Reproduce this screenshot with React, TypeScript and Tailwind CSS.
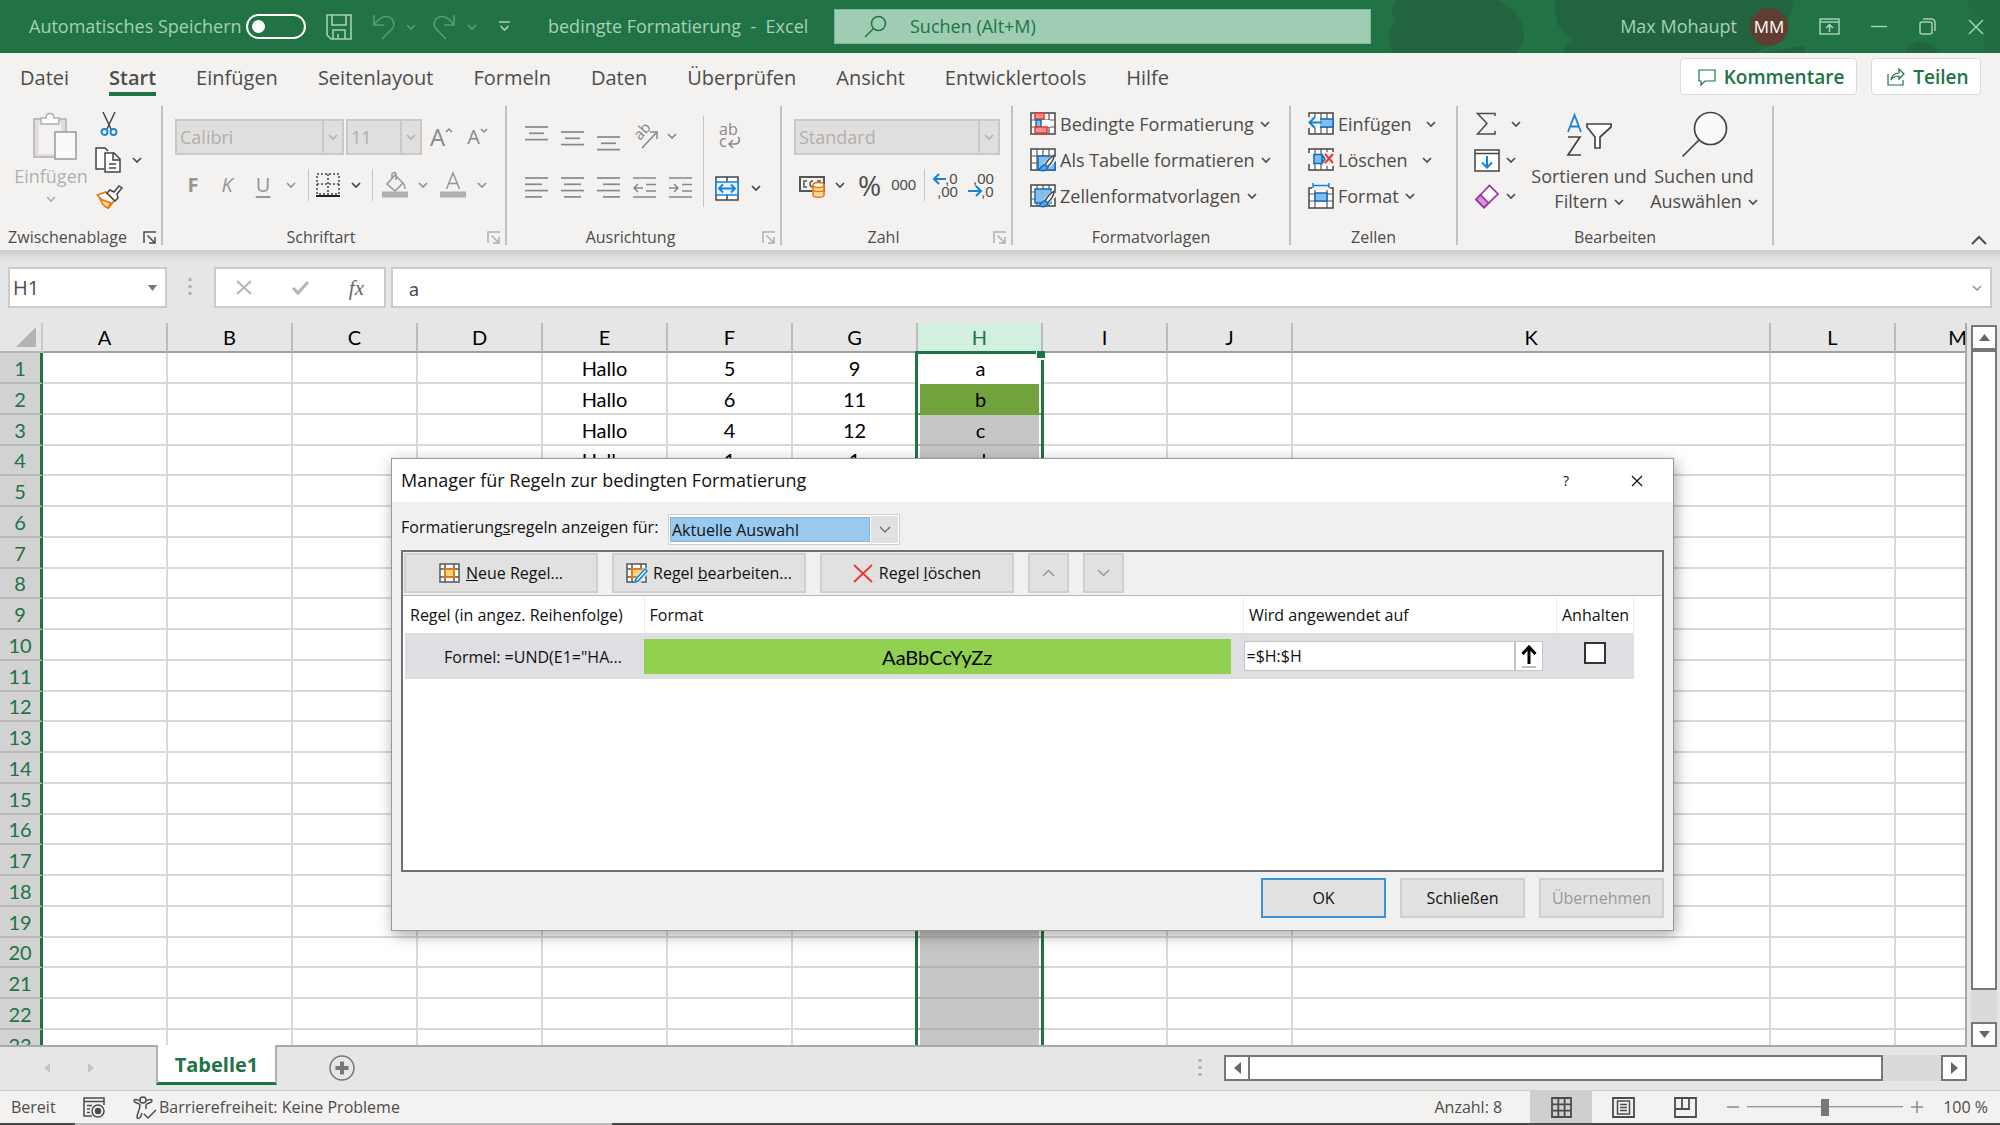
import type { ReactNode } from "react";

const columns = [
  { name: "A", width: 125 },
  { name: "B", width: 125 },
  { name: "C", width: 125 },
  { name: "D", width: 125 },
  { name: "E", width: 125 },
  { name: "F", width: 125 },
  { name: "G", width: 125 },
  { name: "H", width: 125 },
  { name: "I", width: 125 },
  { name: "J", width: 125 },
  { name: "K", width: 478 },
  { name: "L", width: 125 },
  { name: "M", width: 125 },
];

const cells: Record<string, string> = {
  E1: "Hallo", F1: "5", G1: "9", H1: "a",
  E2: "Hallo", F2: "6", G2: "11", H2: "b",
  E3: "Hallo", F3: "4", G3: "12", H3: "c",
  E4: "Hallo", F4: "1", G4: "1", H4: "d",
};

const tabs = [
  "Datei",
  "Start",
  "Einfügen",
  "Seitenlayout",
  "Formeln",
  "Daten",
  "Überprüfen",
  "Ansicht",
  "Entwicklertools",
  "Hilfe",
];

type IconProps = {
  w: number;
  h: number;
  children: ReactNode;
  className?: string;
};

function Icon({ w, h, children, className = "" }: IconProps) {
  return (
    <svg
      width={w}
      height={h}
      viewBox={`0 0 ${w} ${h}`}
      fill="none"
      stroke="currentColor"
      strokeWidth="1.5"
      aria-hidden="true"
      className={`shrink-0 overflow-visible ${className}`}
    >
      {children}
    </svg>
  );
}

function Chevron({ className = "" }: { className?: string }) {
  return (
    <Icon w={10} h={6} className={className}>
      <path d="M1 1l4 4 4-4" strokeWidth="1.7" />
    </Icon>
  );
}

function IconButton({ label, children, className = "" }: { label: string; children: ReactNode; className?: string }) {
  return (
    <button type="button" aria-label={label} className={`flex shrink-0 items-center justify-center ${className}`}>
      {children}
    </button>
  );
}

function Group({ title, launcher, width, children }: { title: string; launcher?: string; width: string; children: ReactNode }) {
  return (
    <section className={`flex shrink-0 flex-col border-r-2 border-[#c3c2c1] ${width}`}>
      <div className="flex-1">{children}</div>
      <div className="flex h-4 items-center">
        <h2 className={`flex-1 text-center text-[16px] leading-4 whitespace-nowrap text-[#4d4c4b] ${launcher ? "pr-2" : ""}`}>
          {title}
        </h2>
        {launcher && (
          <IconButton label={`${title} Optionen`} className={`mr-1 ${launcher}`}>
            <Icon w={14} h={13}>
              <path d="M1 12V1h12M4.500 4.500l7 7M12 6v6H6" />
            </Icon>
          </IconButton>
        )}
      </div>
    </section>
  );
}

function GridIcon({ children }: { children?: ReactNode }) {
  return (
    <Icon w={26} h={24}>
      <rect x="1" y="1" width="24" height="21" fill="#fff" stroke="#444" />
      <path d="M1 8h24M1 15h24M7 1v21M13 1v21M19 1v21" stroke="#555" strokeWidth="1.2" />
      {children}
    </Icon>
  );
}

function BrushMark() {
  return (
    <g>
      <path d="M25 8.500L14 20" stroke="#f3f2f1" strokeWidth="7" />
      <path d="M24 7.500c-3 1-7 6-9 9l2.500 2.500c3-3 6.500-8 6.500-11.500z" fill="#fff" stroke="#444" />
      <path d="M15 16.500c-3 0-3.500 3-6 5 3 2 8 1.500 9-2z" fill="#5ea3dc" stroke="#0f6cbd" />
    </g>
  );
}

const condIcon = (
  <GridIcon>
    <rect x="5" y="1" width="9" height="6" fill="#ff8f8f" stroke="#e8362d" />
    <rect x="6" y="8" width="5" height="7" fill="#83beec" stroke="#0f6cbd" />
    <path d="M12 8h8v7h-8z" fill="#fff" stroke="none" />
    <rect x="5" y="15" width="12" height="6" fill="#ff8f8f" stroke="#e8362d" />
  </GridIcon>
);

const tableIcon = (
  <GridIcon>
    <path d="M8 8h17v14H8z" fill="#83beec" stroke="#0f6cbd" />
    <BrushMark />
  </GridIcon>
);

const styleIcon = (
  <GridIcon>
    <path d="M5 5h16v14H5z" fill="#83beec" stroke="#0f6cbd" />
    <BrushMark />
  </GridIcon>
);

const insertIcon = (
  <GridIcon>
    <rect x="9" y="7" width="16" height="8" fill="#83beec" stroke="#0f6cbd" />
    <path d="M0 5h12v11H0z" fill="#f3f2f1" stroke="none" />
    <path d="M14 10.500H2M7 5l-5.500 5.500L7 16" stroke="#1683d8" strokeWidth="2" />
  </GridIcon>
);

const deleteIcon = (
  <GridIcon>
    <path d="M0 5h5v11H0zM14 4h12v14H14z" fill="#f3f2f1" stroke="none" />
    <path d="M6 6.500h8v9H6zM14 6.500l3 4.500-3 4.500" fill="#83beec" stroke="#0f6cbd" />
    <path d="M17 6l8 9M25 6l-8 9" stroke="#e8362d" strokeWidth="2" />
  </GridIcon>
);

const formatIcon = (
  <Icon w={26} h={26}>
    <rect x="1" y="5" width="24" height="20" fill="#fff" stroke="#444" />
    <path d="M1 11h24M1 18h24M7 5v20M19 5v20" stroke="#555" strokeWidth="1.200" />
    <path d="M4 0h18v7H4z" fill="#f3f2f1" stroke="none" />
    <rect x="7" y="10" width="12" height="8" fill="#83beec" stroke="#0f6cbd" />
    <path d="M5 2.500h16M5 0v5M21 0v5" stroke="#1683d8" />
  </Icon>
);

function LabelButton({ icon, label, gap = "gap-1.5" }: { icon: ReactNode; label: string; gap?: string }) {
  return (
    <button type="button" className="flex h-9 items-center text-[#4d4c4b]">
      {icon}
      <span className={`ml-1 flex items-center text-[18px] leading-6 ${gap}`}>
        {label}
        <Chevron />
      </span>
    </button>
  );
}

function Lines({ rows, top = 1 }: { rows: [number, number][]; top?: number }) {
  return (
    <Icon w={23} h={26}>
      {rows.map(([x, w], i) => (
        <path key={i} d={`M${x} ${top + i * 6.300}h${w}`} strokeWidth="1.700" />
      ))}
    </Icon>
  );
}

function TitleBar() {
  return (
    <header className="relative h-[53px] overflow-hidden bg-[#217346] text-[#a5d0b6]">
      <svg className="absolute top-0 right-0" width="620" height="53" viewBox="0 0 620 53" aria-hidden="true">
        <path d="M14 53c-8-12-6-24 2-31-6-8-4-16 0-22h102c28 14 32 38 18 53z" fill="#21643f" />
        <path d="M176 0c-4 22 6 34 17 39-6 6-9 10-11 14h199l44-8v8h-50c16-6 22-12 30-25 4-12 8-18 8-28z" fill="#21643f" />
        <path d="M526 53c4-15 26-15 32 0z" fill="#21643f" />
        <path d="M586 0h34v53h-16c4-22-6-38-18-53z" fill="#216c43" />
      </svg>
      <div className="relative flex h-full items-center">
        <div className="flex w-[834px] shrink-0 items-center">
          <span className="ml-[29px] w-[217px] text-[18px] whitespace-nowrap">Automatisches Speichern</span>
          <button
            type="button"
            role="switch"
            aria-checked="false"
            aria-label="Automatisches Speichern"
            className="flex h-[25px] w-[60px] shrink-0 items-center rounded-full border-2 border-white pl-1"
          >
            <span className="size-[13px] rounded-full bg-white" />
          </button>
          <IconButton label="Speichern" className="ml-5">
            <Icon w={26} h={26}>
              <path d="M1 1h24v24H5l-4-4zM6 1v10h14V1M7 25v-9h12v9M12 25v-5" strokeWidth="1.600" />
            </Icon>
          </IconButton>
          <IconButton label="Rückgängig" className="ml-5 gap-[11px] text-[#5c9a77]">
            <Icon w={23} h={26}>
              <path d="M2 1v10h10M2 11C9 1 16 1 20 5c3 4 2 8-1 11l-9 9" />
            </Icon>
            <Chevron />
          </IconButton>
          <IconButton label="Wiederholen" className="ml-[17px] gap-[11px] text-[#5c9a77]">
            <Icon w={23} h={26}>
              <path d="M21 1v10H11M21 11C14 1 7 1 3 5c-3 4-2 8 1 11l9 9" />
            </Icon>
            <Chevron />
          </IconButton>
          <IconButton label="Symbolleiste anpassen" className="ml-[22px]">
            <Icon w={11} h={11}>
              <path d="M0 1h11M1.500 5l4 4 4-4" strokeWidth="1.700" />
            </Icon>
          </IconButton>
          <h1 className="ml-[38px] text-[18px] whitespace-pre">bedingte Formatierung  -  Excel</h1>
        </div>
        <label className="flex h-[35px] w-[537px] shrink items-center border border-[#7db898] bg-[#9fcdb3] pl-[29px] text-[#217346]">
          <Icon w={23} h={23}>
            <circle cx="14.500" cy="8.500" r="7" />
            <path d="M9.500 13.500L1 22" />
          </Icon>
          <input
            aria-label="Suchen"
            placeholder="Suchen (Alt+M)"
            className="ml-[23px] min-w-0 flex-1 bg-transparent text-[18px] outline-none placeholder:text-[#217346]"
          />
        </label>
        <div className="ml-auto flex items-center pr-4">
          <span className="text-[18px]">Max Mohaupt</span>
          <span className="ml-[13px] flex size-[38px] items-center justify-center rounded-full bg-[#5f3d30] text-[17px] text-white">
            MM
          </span>
          <IconButton label="Menüband anzeigen" className="ml-[31px]">
            <Icon w={21} h={17}>
              <path d="M1 1h19v15H1zM1 4h19M10.500 14V7M7 10l3.500-3.500L14 10" />
            </Icon>
          </IconButton>
          <IconButton label="Minimieren" className="ml-[31px]">
            <Icon w={16} h={16}><path d="M0 7.500h16" /></Icon>
          </IconButton>
          <IconButton label="Wiederherstellen" className="ml-8">
            <Icon w={17} h={17}>
              <rect x="1" y="4" width="12" height="12" rx="2" />
              <path d="M4 1h8q4 0 4 4v8" />
            </Icon>
          </IconButton>
          <IconButton label="Schließen" className="ml-8">
            <Icon w={16} h={16}><path d="M1 1l14 14M15 1L1 15" /></Icon>
          </IconButton>
        </div>
      </div>
    </header>
  );
}

function TabRow() {
  return (
    <div className="flex h-[53px] items-start">
      <nav className="flex gap-10 pt-[11px] pl-5 text-[20px] leading-7 text-[#4d4c4b]">
        {tabs.map((tab) => (
          <a
            key={tab}
            href="#"
            className={tab === "Start" ? "border-b-4 border-[#217346] font-semibold" : "border-b-4 border-transparent"}
          >
            {tab}
          </a>
        ))}
      </nav>
      <div className="ml-auto flex gap-[14px] pt-[5px] pr-[19px] text-[19px] leading-6 font-semibold text-[#217346]">
        <button type="button" className="flex h-[37px] w-[177px] items-center justify-center gap-2 rounded border border-[#dcdbda] bg-white pl-[5px] pt-px">
          <Icon w={18} h={17}>
            <path d="M1 1h16v11H7l-4 4v-4H1z" strokeWidth="1.200" />
          </Icon>
          Kommentare
        </button>
        <button type="button" className="flex h-[37px] w-[110px] items-center justify-center gap-2 rounded border border-[#dcdbda] bg-white pl-1 pt-px">
          <Icon w={18} h={18}>
            <path d="M1 6v11h15v-5M4 12c1-5 4-7 8-7V1l5 5-5 5V8c-4 0-6 1-8 4z" strokeWidth="1.200" />
          </Icon>
          Teilen
        </button>
      </div>
    </div>
  );
}

function RibbonSelect({ label, value, width }: { label: string; value: string; width: string }) {
  return (
    <div className={`flex h-9 items-center border-2 border-[#cbc9c8] bg-[#e1dfdd] text-[#b1afad] ${width}`}>
      <select aria-label={label} disabled className="h-full min-w-0 flex-1 appearance-none pl-[3px] text-[18px] opacity-100">
        <option>{value}</option>
      </select>
      <span className="flex h-full w-5 shrink-0 items-center justify-center border-l-2 border-[#cbc9c8]">
        <Chevron />
      </span>
    </div>
  );
}

const divider = "h-8 w-px shrink-0 bg-[#c8c6c4]";
const iconText = "font-['Liberation_Sans',sans-serif] text-[15px]";

function Ribbon() {
  return (
    <div className="flex h-[144px] pb-[5px] text-[#4d4c4b]">
      <Group title="Zwischenablage" launcher="text-[#4d4c4b]" width="w-[163px]">
        <div className="flex">
          <button type="button" className="flex w-[90px] flex-col items-center pt-[6px] pl-3 text-[18px] leading-6 text-[#b1afad]">
            <Icon w={44} h={48} className="ml-2">
              <path d="M1 7h32v38H1z" fill="#e1dfdd" />
              <path d="M6 10h22v32H6z" fill="#f3f2f1" stroke="none" />
              <path d="M8 12V6h5c0-6 8-6 8 0h5v6z" fill="#fff" />
              <path d="M22 20h21v27H22z" fill="#fafafa" stroke="#999" />
            </Icon>
            <span className="mt-1">Einfügen</span>
            <Chevron className="mt-2" />
          </button>
          <div className="flex flex-col pl-[5px]">
            <IconButton label="Ausschneiden" className="h-9 w-7">
              <Icon w={18} h={26}>
                <path d="M3 1l8 17M15 1L7 18" stroke="#444" />
                <circle cx="4.500" cy="21" r="3" stroke="#1683d8" strokeWidth="1.800" />
                <circle cx="13.500" cy="21" r="3" stroke="#1683d8" strokeWidth="1.800" />
              </Icon>
            </IconButton>
            <IconButton label="Kopieren" className="h-9 gap-[10px]">
              <Icon w={27} h={26}>
                <path d="M9 22H1V1h9l3 3" fill="#fff" stroke="#444" />
                <path d="M10 6h9l6 6v13H10zM18 6v7h7M14 17h7M14 21h7" fill="#fff" stroke="#444" />
              </Icon>
              <Chevron />
            </IconButton>
            <IconButton label="Format übertragen" className="h-9 w-7">
              <Icon w={27} h={25}>
                <path d="M1.500 11l8-3 9 8-6 8z" fill="#fff" stroke="#e8780c" strokeWidth="1.800" />
                <path d="M4 15l11 4-3 5c-3-1-6-4-8-9z" fill="#fcd385" stroke="#e8780c" />
                <path d="M11 9l3-3 4 2 5-6 3 2-5 6 1 4-3 3z" fill="#fff" stroke="#444" />
              </Icon>
            </IconButton>
          </div>
        </div>
      </Group>

      <Group title="Schriftart" launcher="text-[#b1afad]" width="w-[344px]">
        <div className="flex items-center gap-[2px] pt-[13px] pl-3 text-[#8a8886]">
          <RibbonSelect label="Schriftart" value="Calibri" width="w-[169px]" />
          <RibbonSelect label="Schriftgrad" value="11" width="w-[76px]" />
          <button type="button" aria-label="Schrift vergrößern" className="ml-[6px] flex items-start text-[24px] leading-7">
            A<Icon w={8} h={5} className="mt-[5px]"><path d="M1 4l3-3 3 3" /></Icon>
          </button>
          <button type="button" aria-label="Schrift verkleinern" className="ml-3 flex items-start text-[20px] leading-7">
            A<Icon w={8} h={5} className="mt-[5px]"><path d="M1 1l3 3 3-3" /></Icon>
          </button>
        </div>
        <div className="flex items-center pt-[14px] pl-5 text-[20px] leading-8 text-[#979593]">
          <button type="button" className="w-5 font-bold">F</button>
          <button type="button" className="ml-[14px] w-5 italic">K</button>
          <button type="button" className="ml-4 w-5 underline underline-offset-4">U</button>
          <Chevron className="ml-[13px]" />
          <span className={`ml-3 ${divider}`} />
          <IconButton label="Rahmen" className="ml-[7px] gap-[11px] text-[#444]">
            <Icon w={24} h={24}>
              <path d="M1 1h22v20H1zM1 11h22M12 1v20" strokeDasharray="2 2" />
              <path d="M0 23h24" stroke="#222" strokeWidth="2" />
            </Icon>
            <Chevron />
          </IconButton>
          <span className={`ml-[11px] ${divider}`} />
          <IconButton label="Füllfarbe" className="ml-[9px] gap-[10px]">
            <Icon w={26} h={26}>
              <path d="M5 12l8-9 8 8-8 8zM10 6V2c1-2 4-2 4 0v6M21 11c2 2 2 4 2 6" />
              <path d="M0 22.500h26" stroke="#b1afad" strokeWidth="6" />
            </Icon>
            <Chevron />
          </IconButton>
          <IconButton label="Schriftfarbe" className="ml-3 gap-[11px]">
            <Icon w={26} h={26}>
              <path d="M6.500 17L13 1l6.500 16M9 11.500h8" />
              <path d="M0 22.500h26" stroke="#b1afad" strokeWidth="6" />
            </Icon>
            <Chevron />
          </IconButton>
        </div>
      </Group>

      <Group title="Ausrichtung" launcher="text-[#b1afad]" width="w-[275px]">
        <div className="flex pl-[18px] text-[#8a8886]">
          <div className="flex w-[178px] flex-col gap-[14px] pt-[10px]">
            <div className="flex h-10 items-center gap-[13px]">
              <IconButton label="Oben ausrichten"><Lines rows={[[0, 23], [4, 15], [0, 23]]} top={4} /></IconButton>
              <IconButton label="Zentriert ausrichten"><Lines rows={[[0, 23], [4, 15], [0, 23]]} top={9} /></IconButton>
              <IconButton label="Unten ausrichten"><Lines rows={[[0, 23], [4, 15], [0, 23]]} top={14} /></IconButton>
              <button type="button" aria-label="Ausrichtung" className="flex items-center gap-2">
                <Icon w={26} h={26}>
                  <text transform="translate(7 18) rotate(-48)" fill="currentColor" stroke="none" className="text-[15px]">ab</text>
                  <path d="M9 25L24 9M17 9h7v7" />
                </Icon>
                <Chevron />
              </button>
            </div>
            <div className="flex h-9 items-center gap-[13px]">
              <IconButton label="Linksbündig"><Lines rows={[[0, 23], [0, 17], [0, 23], [0, 17]]} top={3} /></IconButton>
              <IconButton label="Zentriert"><Lines rows={[[0, 23], [3, 17], [0, 23], [3, 17]]} top={3} /></IconButton>
              <IconButton label="Rechtsbündig"><Lines rows={[[0, 23], [6, 17], [0, 23], [6, 17]]} top={3} /></IconButton>
              <IconButton label="Einzug verkleinern">
                <Icon w={23} h={26}>
                  <path d="M0 3h23M13 9.500h10M13 16h10M0 22h23" strokeWidth="1.700" />
                  <path d="M10 13H1M5 9l-4 4 4 4" />
                </Icon>
              </IconButton>
              <IconButton label="Einzug vergrößern">
                <Icon w={23} h={26}>
                  <path d="M0 3h23M13 9.500h10M13 16h10M0 22h23" strokeWidth="1.700" />
                  <path d="M0 13h9M5 9l4 4-4 4" />
                </Icon>
              </IconButton>
            </div>
          </div>
          <span className="mt-[10px] h-[91px] w-px bg-[#c8c6c4]" />
          <div className="flex flex-col gap-[14px] pt-[10px] pl-[11px]">
            <IconButton label="Textumbruch" className="h-10 w-7">
              <Icon w={24} h={28}>
                <text x="2" y="13" fill="currentColor" stroke="none" className="text-[16px]">ab</text>
                <text x="2" y="25" fill="currentColor" stroke="none" className="text-[16px]">c</text>
                <path d="M21 15c3 3 1 7-3 7h-6M16 18l-4 4 4 4" />
              </Icon>
            </IconButton>
            <IconButton label="Verbinden und zentrieren" className="h-9 gap-3 text-[#444]">
              <Icon w={24} h={25}>
                <path d="M1 1h22v23H1zM12 1v5M12 19v5" fill="#fff" />
                <path d="M1 6h22v13H1z" fill="#e5f1fb" stroke="#1683d8" />
                <path d="M4 12.500h16M8 8.500l-4 4 4 4M16 8.500l4 4-4 4" stroke="#1683d8" strokeWidth="1.800" />
              </Icon>
              <Chevron />
            </IconButton>
          </div>
        </div>
      </Group>

      <Group title="Zahl" launcher="text-[#b1afad]" width="w-[231px]">
        <div className="pt-[13px] pl-3">
          <RibbonSelect label="Zahlenformat" value="Standard" width="w-[206px]" />
        </div>
        <div className="flex items-center pt-[14px] pl-[17px] text-[#4d4c4b]">
          <IconButton label="Buchhaltungszahlenformat" className="gap-[10px]">
            <Icon w={26} h={26}>
              <path d="M1 5h24v14H1z" strokeWidth="2" stroke="#555" />
              <path d="M8 9H5v6h3M14 9c-4-1-4 7 0 6M18 9h3v3" stroke="#555" />
              <path d="M14 13v10c0 3 11 3 11 0V13" fill="#fdd9a0" stroke="#e8780c" />
              <ellipse cx="19.500" cy="13" rx="5.500" ry="2.500" fill="#fff" stroke="#e8780c" />
              <path d="M14 18c0 2 11 2 11 0" stroke="#e8780c" />
            </Icon>
            <Chevron />
          </IconButton>
          <button type="button" className="ml-[13px] text-[28px] leading-8">%</button>
          <button type="button" className={`ml-[10px] ${iconText} leading-8`}>000</button>
          <span className={`ml-2 ${divider}`} />
          <IconButton label="Dezimalstelle hinzufügen" className="ml-2">
            <Icon w={25} h={26}>
              <text x="12" y="12" fill="currentColor" stroke="none" className={iconText}>,0</text>
              <text x="4" y="25" fill="currentColor" stroke="none" className={iconText}>,00</text>
              <path d="M13 7H1M6 2L1 7l5 5" stroke="#1683d8" strokeWidth="2" />
            </Icon>
          </IconButton>
          <IconButton label="Dezimalstelle löschen" className="ml-[10px]">
            <Icon w={26} h={26}>
              <text x="5" y="12" fill="currentColor" stroke="none" className={iconText}>,00</text>
              <text x="13" y="25" fill="currentColor" stroke="none" className={iconText}>,0</text>
              <path d="M0 19h13M8 14l5 5-5 5" stroke="#1683d8" strokeWidth="2" />
            </Icon>
          </IconButton>
        </div>
      </Group>

      <Group title="Formatvorlagen" width="w-[278px]">
        <div className="flex flex-col pl-[17px]">
          <LabelButton icon={condIcon} label="Bedingte Formatierung" />
          <LabelButton icon={tableIcon} label="Als Tabelle formatieren" />
          <LabelButton icon={styleIcon} label="Zellenformatvorlagen" />
        </div>
      </Group>

      <Group title="Zellen" width="w-[167px]">
        <div className="flex flex-col pl-[17px]">
          <LabelButton icon={insertIcon} label="Einfügen" gap="gap-[14px]" />
          <LabelButton icon={deleteIcon} label="Löschen" gap="gap-[14px]" />
          <LabelButton icon={formatIcon} label="Format" />
        </div>
      </Group>

      <Group title="Bearbeiten" width="w-[316px]">
        <div className="flex text-[18px] leading-[25px]">
          <div className="flex w-[71px] flex-col items-start pl-4">
            <IconButton label="Summe" className="h-9 gap-[11px]">
              <Icon w={26} h={24}>
                <path d="M21 4V1.500H3.500L13 11.500 3.500 22H21V19" />
              </Icon>
              <Chevron />
            </IconButton>
            <IconButton label="Ausfüllen" className="h-9 gap-[6px]">
              <Icon w={26} h={23}>
                <path d="M1 1h24v21H1z" fill="#fff" stroke="#444" />
                <path d="M1 4.500h24" stroke="#444" />
                <path d="M13 7v11M8 13.500l5 5 5-5" stroke="#1683d8" strokeWidth="2" />
              </Icon>
              <Chevron />
            </IconButton>
            <IconButton label="Löschen" className="h-9 gap-[6px]">
              <Icon w={26} h={25}>
                <path d="M2 15.500L15.500 1.500l8.500 8.500L10 23.500z" fill="#fff" stroke="#9b2fa5" strokeWidth="1.700" />
                <path d="M2 15.500L6.500 11l8 8-4.500 4.500z" fill="#d195d6" stroke="#9b2fa5" strokeWidth="1.700" />
              </Icon>
              <Chevron />
            </IconButton>
          </div>
          <button type="button" className="flex w-[120px] flex-col items-center pt-2">
            <Icon w={46} h={43}>
              <path d="M2 18L8.500 1 15 18M4 12.500h9" stroke="#1683d8" strokeWidth="1.800" />
              <path d="M2 23h12L2 41h13" stroke="#444" strokeWidth="1.700" />
              <path d="M21 10h24v3L34 23v11h-5V23l-8-10z" fill="#fff" stroke="#444" strokeWidth="1.700" />
            </Icon>
            <span className="mt-[7px]">Sortieren und</span>
            <span className="flex items-center gap-[6px]">Filtern <Chevron /></span>
          </button>
          <button type="button" className="flex w-[110px] flex-col items-center pt-[5px]">
            <Icon w={47} h={46}>
              <circle cx="29.500" cy="17.500" r="16" fill="#fafafa" stroke="#444" strokeWidth="1.700" />
              <path d="M18 29L1.500 45.500" stroke="#444" strokeWidth="1.700" />
            </Icon>
            <span className="mt-[7px]">Suchen und</span>
            <span className="flex items-center gap-[6px]">Auswählen <Chevron /></span>
          </button>
        </div>
      </Group>
      <IconButton label="Menüband reduzieren" className="mr-[13px] ml-auto self-end">
        <Icon w={16} h={9}><path d="M1 8l7-7 7 7" strokeWidth="2" /></Icon>
      </IconButton>
    </div>
  );
}

function FormulaBar() {
  return (
    <div className="flex h-[73px] items-start border-t border-[#cfcfcf] bg-linear-to-b from-[#d0d0d0] to-[#e6e6e6] to-15% px-2 pt-4 text-[#4d4c4b]">
      <div className="flex h-[41px] w-[159px] items-center border-2 border-[#cbcbcb] bg-white pr-2">
        <input aria-label="Namenfeld" defaultValue="H1" className="min-w-0 flex-1 pl-[3px] text-[20px] outline-none" />
        <Icon w={9} h={6}><path d="M0 0h9L4.500 6z" fill="#777" stroke="none" /></Icon>
      </div>
      <Icon w={4} h={18} className="mt-[11px] ml-[21px] text-[#b0b0b0]">
        <path d="M2 0v18" strokeWidth="3" strokeDasharray="3 4" />
      </Icon>
      <div className="ml-[22px] flex h-[41px] w-[172px] items-center justify-between border-2 border-[#cbcbcb] bg-white px-5 text-[#b5b5b5]">
        <IconButton label="Abbrechen">
          <Icon w={16} h={15}><path d="M1 1l14 13M15 1L1 14" strokeWidth="2" /></Icon>
        </IconButton>
        <IconButton label="Eingeben">
          <Icon w={17} h={14}><path d="M1 7l5 5L16 1" strokeWidth="3" /></Icon>
        </IconButton>
        <button type="button" aria-label="Funktion einfügen" className="font-['Liberation_Serif',serif] text-[21px] leading-8 text-[#666] italic">
          fx
        </button>
      </div>
      <div className="ml-[5px] flex h-[41px] flex-1 items-center border-2 border-[#cbcbcb] bg-white pr-2 pl-4">
        <input
          aria-label="Bearbeitungsleiste"
          defaultValue="a"
          className="min-w-0 flex-1 font-[Lato,sans-serif] text-[20px] outline-none"
        />
        <Chevron className="text-[#999]" />
      </div>
    </div>
  );
}

function cellStyle(col: string, row: number) {
  if (col !== "H") return "border-r-2 border-b-2 border-[#d9d9d9]";
  const gap = "shadow-[inset_2px_0_0_#fff,inset_-4px_0_0_#fff]";
  if (row === 1) return `border-b-2 border-white ${gap}`;
  if (row === 2) return `border-b-2 border-[#72a23d] bg-[#72a23d] ${gap}`;
  return `border-b-2 border-[#b2b2b2] bg-[#c6c6c6] ${gap}`;
}

function Sheet() {
  return (
    <div className="flex min-h-0 flex-1">
      <div className="relative min-w-0 flex-1 overflow-hidden border-r-2 border-b-2 border-[#a9a9a9] bg-white">
        <table className="w-[2021px] table-fixed border-separate border-spacing-0 text-center font-[Lato,sans-serif] text-[20px] leading-7 text-black">
          <colgroup>
            <col className="w-[43px]" />
            {columns.map((c) => (
              <col key={c.name} style={{ width: c.width }} />
            ))}
          </colgroup>
          <thead>
            <tr className="h-[30px] bg-[#e6e6e6]">
              <th aria-label="Alles auswählen" className="border-r-2 border-b-2 border-[#b5b5b5] border-r-[#c9c9c9] p-0">
                <Icon w={20} h={20} className="ml-4"><path d="M20 0v20H0z" fill="#b3b3b3" stroke="none" /></Icon>
              </th>
              {columns.map((c) => (
                <th
                  key={c.name}
                  scope="col"
                  className={`border-r-2 border-b-2 border-r-[#bcbcbc] border-b-[#a0a0a0] p-0 font-normal ${
                    c.name === "H" ? "bg-[#d2f0e0] text-[#217346]" : ""
                  }`}
                >
                  {c.name}
                </th>
              ))}
            </tr>
          </thead>
          <tbody>
            {Array.from({ length: 23 }, (_, i) => i + 1).map((row) => (
              <tr key={row} className="h-[31px] nth-[4n]:h-[30px]">
                <th
                  scope="row"
                  className="border-r-[3px] border-b-2 border-r-[#217346] border-b-[#b8b8b8] bg-[#d2d2d2] p-0 font-normal text-[#217346]"
                >
                  {row}
                </th>
                {columns.map((c) => (
                  <td key={c.name} className={`p-0 ${cellStyle(c.name, row)}`}>
                    {cells[`${c.name}${row}`]}
                  </td>
                ))}
              </tr>
            ))}
          </tbody>
        </table>
        <div className="pointer-events-none absolute top-[28px] -bottom-1 left-[915px] w-[129px] border-[3px] border-[#217346]">
          <span className="absolute -top-[3px] -right-[4px] size-[9px] border-b-2 border-l border-white bg-[#217346]" />
        </div>
      </div>
      <div className="flex w-[33px] flex-col bg-[#e6e6e6] pt-[2px] pr-[3px] pl-1">
        <IconButton label="Nach oben" className="h-[25px] border-2 border-[#777] bg-white">
          <Icon w={11} h={7}><path d="M0 7h11L5.500 0z" fill="#666" stroke="none" /></Icon>
        </IconButton>
        <div className="flex flex-1 flex-col bg-[#dadada] pb-8">
          <div className="flex-1 border-2 border-[#777] bg-white" />
        </div>
        <IconButton label="Nach unten" className="h-[25px] border-2 border-[#777] bg-white">
          <Icon w={11} h={7}><path d="M0 0h11L5.500 7z" fill="#666" stroke="none" /></Icon>
        </IconButton>
      </div>
    </div>
  );
}

function SheetTabs() {
  return (
    <div className="flex h-[43px] items-start bg-[#e6e6e6] text-[#c4c4c4]">
      <div className="flex w-[156px] gap-[38px] pt-4 pl-11">
        <IconButton label="Vorheriges Blatt">
          <Icon w={6} h={10}><path d="M6 0v10L0 5z" fill="currentColor" stroke="none" /></Icon>
        </IconButton>
        <IconButton label="Nächstes Blatt">
          <Icon w={6} h={10}><path d="M0 0v10l6-5z" fill="currentColor" stroke="none" /></Icon>
        </IconButton>
      </div>
      <button
        type="button"
        className="z-10 -mt-[2px] h-10 w-[121px] border-x-2 border-b-[3px] border-x-[#b0b0b0] border-b-[#217346] bg-white pt-[2px] text-[20px] leading-9 font-bold text-[#217346]"
      >
        Tabelle1
      </button>
      <IconButton label="Neues Blatt" className="mt-2 ml-[52px] text-[#777]">
        <Icon w={26} h={26}>
          <circle cx="13" cy="13" r="12" />
          <path d="M6.500 13h13M13 6.500v13" strokeWidth="4" />
        </Icon>
      </IconButton>
      <Icon w={4} h={18} className="mt-3 ml-auto text-[#b0b0b0]">
        <path d="M2 0v18" strokeWidth="3" strokeDasharray="3 4" />
      </Icon>
      <div className="mt-2 mr-[33px] ml-[22px] flex h-[26px] w-[38%] max-w-[743px] bg-[#dadada]">
        <IconButton label="Nach links" className="w-[26px] border-2 border-[#777] bg-white">
          <Icon w={7} h={12}><path d="M7 0v12L0 6z" fill="#666" stroke="none" /></Icon>
        </IconButton>
        <div className="flex-1 border-2 border-l-0 border-[#777] bg-white" />
        <IconButton label="Nach rechts" className="ml-[58px] w-[26px] border-2 border-[#777] bg-white">
          <Icon w={7} h={12}><path d="M0 0v12l7-6z" fill="#666" stroke="none" /></Icon>
        </IconButton>
      </div>
    </div>
  );
}

function StatusBar() {
  return (
    <footer className="flex h-[33px] shrink-0 items-center border-t border-[#cfcfcf] bg-[#f3f2f1] text-[16px] text-[#4d4c4b]">
      <span className="ml-[11px] w-[72px]">Bereit</span>
      <IconButton label="Makro aufzeichnen" className="w-[22px]">
        <Icon w={22} h={21}>
          <path d="M9 19H1V1h20v7M1 4.500h20M4 8.500h5M4 12h3M4 15.500h3" />
          <circle cx="15" cy="14" r="6" />
          <circle cx="15" cy="14" r="2.500" fill="currentColor" />
        </Icon>
      </IconButton>
      <button type="button" className="ml-7 flex items-center gap-[2px]">
        <Icon w={24} h={23}>
          <circle cx="10" cy="4" r="3" />
          <path d="M7 5C4 3 1 3 1 5s5 2 6 4c0 5-3 8-3 12 0 2 3 2 4-1l1-3M13 5c3-2 6-2 6 0s-5 2-6 4v4M11 18l4 4 8-8" />
        </Icon>
        Barrierefreiheit: Keine Probleme
      </button>
      <span className="mr-7 ml-auto">Anzahl: 8</span>
      <IconButton label="Normal" className="h-full w-[62px] bg-[#d0cfcd]">
        <Icon w={21} h={21}>
          <path d="M1 1h19v19H1zM1 7.300h19M1 13.600h19M7.300 1v19M13.600 1v19" strokeWidth="1.800" />
        </Icon>
      </IconButton>
      <IconButton label="Seitenlayout" className="w-[62px]">
        <Icon w={23} h={21}>
          <path d="M1 1h21v19H1z" strokeWidth="1.800" />
          <path d="M5.500 4h12v13h-12zM8 7.500h7M8 10.500h7M8 13.500h7" />
        </Icon>
      </IconButton>
      <IconButton label="Umbruchvorschau" className="w-[62px]">
        <Icon w={23} h={21}>
          <path d="M1 1h21v19H1zM1 12h14V1M8 1v11" strokeWidth="1.800" />
        </Icon>
      </IconButton>
      <IconButton label="Verkleinern" className="ml-[11px] text-[#8a8886]"><Icon w={12} h={12}><path d="M0 6h12" /></Icon></IconButton>
      <input
        type="range"
        aria-label="Zoom"
        defaultValue={50}
        className="mx-2 h-5 w-[156px] appearance-none bg-linear-to-b from-transparent from-45% via-[#777] via-45% to-transparent to-55% [&::-webkit-slider-thumb]:h-[17px] [&::-webkit-slider-thumb]:w-2 [&::-webkit-slider-thumb]:appearance-none [&::-webkit-slider-thumb]:bg-[#777]"
      />
      <IconButton label="Vergrößern" className="text-[#8a8886]"><Icon w={12} h={12}><path d="M0 6h12M6 0v12" /></Icon></IconButton>
      <span className="mr-3 ml-5 whitespace-nowrap">100 %</span>
    </footer>
  );
}

const dialogButton = "flex h-10 items-center justify-center border-2 border-[#d0d0d0] bg-[#e1e1e1] text-[16px]";

function RuleManager() {
  return (
    <div
      role="dialog"
      aria-labelledby="rules-title"
      className="absolute top-[458px] left-[391px] z-20 w-[1283px] border border-[#999] bg-[#f0f0f0] pb-3 text-[16px] text-[#111] shadow-[2px_4px_14px_rgba(0,0,0,0.35)]"
    >
      <div className="flex h-[43px] items-center bg-white pr-[30px] pl-[9px]">
        <h2 id="rules-title" className="flex-1 text-[18px]">Manager für Regeln zur bedingten Formatierung</h2>
        <button type="button" aria-label="Hilfe" className="mr-[62px] text-[14px]">?</button>
        <IconButton label="Dialog schließen">
          <Icon w={12} h={12}><path d="M1 1l10 10M11 1L1 11" strokeWidth="1.200" /></Icon>
        </IconButton>
      </div>
      <div className="flex h-12 items-start px-[9px] pt-3">
        <label htmlFor="scope" className="w-[267px] pt-[3px] leading-5">
          Formatierung<u>s</u>regeln anzeigen für:
        </label>
        <div className="flex h-[31px] w-[232px] border border-[#d0d0d0] bg-white p-px">
          <select id="scope" className="my-px min-w-0 flex-1 appearance-none border border-[#8fb2cf] bg-[#99c9ef] pl-px leading-5">
            <option>Aktuelle Auswahl</option>
          </select>
          <span className="ml-px flex w-[27px] items-center justify-center bg-[#e1e1e1] text-[#666]">
            <Icon w={12} h={7}><path d="M1 1l5 5 5-5" strokeWidth="1.200" /></Icon>
          </span>
        </div>
      </div>
      <div className="mx-[9px] h-[322px] border-2 border-[#6f6f74] bg-white">
        <div className="flex h-11 gap-[14px] border-b border-[#b5b5b5] bg-[#f0f0f0] pt-px pl-px">
          <button type="button" className={`w-[194px] gap-[6px] ${dialogButton}`}>
            <Icon w={21} h={20}>
              <path d="M1 1h19v18H1zM1 6h19M1 14h19M6 1v18M15 1v18" fill="#fff" stroke="#555" />
              <path d="M6 6h9v8H6z" fill="#fcd385" stroke="#e8780c" strokeWidth="2" />
            </Icon>
            <span><u>N</u>eue Regel...</span>
          </button>
          <button type="button" className={`w-[194px] gap-[6px] ${dialogButton}`}>
            <Icon w={21} h={20}>
              <path d="M1 1h19v18H1zM1 6h19M1 14h19M6 1v18M15 1v18" fill="#fff" stroke="#555" />
              <path d="M6 6h10v8H6z" fill="#fcd385" stroke="#e8780c" strokeWidth="2" />
              <path d="M21 6L10 20" stroke="#e1e1e1" strokeWidth="7" />
              <path d="M19 6l2 2-9 10-3 1 1-3z" fill="#fff" stroke="#1683d8" />
            </Icon>
            <span>Regel <u>b</u>earbeiten...</span>
          </button>
          <button type="button" className={`w-[194px] gap-[6px] ${dialogButton}`}>
            <Icon w={20} h={19}><path d="M1 1l18 17M19 1L1 18" stroke="#e8362d" strokeWidth="1.800" /></Icon>
            <span>Regel <u>l</u>öschen</span>
          </button>
          <button type="button" aria-label="Nach oben" disabled className={`w-[41px] text-[#999] ${dialogButton}`}>
            <Icon w={13} h={8}><path d="M1 7l5.500-5.500L12 7" /></Icon>
          </button>
          <button type="button" aria-label="Nach unten" disabled className={`w-[41px] text-[#999] ${dialogButton}`}>
            <Icon w={13} h={8}><path d="M1 1l5.500 5.500L12 1" /></Icon>
          </button>
        </div>
        <table className="ml-[2px] w-[1229px] table-fixed text-left">
          <thead>
            <tr className="h-[37px]">
              <th className="w-[239px] border-r border-[#ececec] pt-px pl-[5px] font-normal whitespace-nowrap">Regel (in angez. Reihenfolge)</th>
              <th className="border-r border-[#ececec] pt-px pl-[5px] font-normal">Format</th>
              <th className="w-[313px] border-r border-[#ececec] pt-px pl-[5px] font-normal">Wird angewendet auf</th>
              <th className="w-[77px] border-r border-[#ececec] pt-px pl-[5px] font-normal">Anhalten</th>
            </tr>
          </thead>
          <tbody>
            <tr className="h-[46px] bg-[#dfdee3]">
              <td className="pt-px pl-[39px] whitespace-nowrap">Formel: =UND(E1="HA...</td>
              <td className="pr-[13px]">
                <div className="h-[35px] bg-[#92d050] text-center font-[Lato,sans-serif] text-[20px] leading-9 text-black">AaBbCcYyZz</div>
              </td>
              <td className="pr-[14px]">
                <div className="flex h-[30px] border border-[#c4c4c4] bg-white">
                  <input aria-label="Wird angewendet auf" defaultValue="=$H:$H" className="min-w-0 flex-1 pl-[2px] outline-none" />
                  <IconButton label="Bereich auswählen" className="w-7 border-l-2 border-[#c4c4c4]">
                    <Icon w={16} h={24}>
                      <path d="M8 20V3M1.500 10L8 3l6.500 7" stroke="#000" strokeWidth="3" />
                      <path d="M1 23h14" stroke="#aaa" />
                    </Icon>
                  </IconButton>
                </div>
              </td>
              <td>
                <input
                  type="checkbox"
                  aria-label="Anhalten"
                  className="mx-auto mb-[6px] block size-[22px] appearance-none border-2 border-[#333] bg-white"
                />
              </td>
            </tr>
          </tbody>
        </table>
      </div>
      <div className="flex justify-end gap-[14px] pt-[6px] pr-[9px]">
        <button type="button" className="h-10 w-[125px] border-2 border-[#3c94d8] bg-[#e1e1e1]">OK</button>
        <button type="button" className={`w-[125px] ${dialogButton}`}>Schließen</button>
        <button type="button" disabled className={`w-[125px] text-[#9a9a9a] ${dialogButton}`}>Übernehmen</button>
      </div>
    </div>
  );
}

export default function App() {
  return (
    <div className="relative flex h-screen flex-col overflow-hidden bg-[#f3f2f1] font-['Open_Sans',sans-serif]">
      <TitleBar />
      <TabRow />
      <Ribbon />
      <FormulaBar />
      <Sheet />
      <SheetTabs />
      <StatusBar />
      <div className="flex h-[2px] shrink-0 bg-[#4a4a4a]">
        <span className="ml-[75px] w-[537px] bg-[#bdbdbd]" />
      </div>
      <RuleManager />
    </div>
  );
}
